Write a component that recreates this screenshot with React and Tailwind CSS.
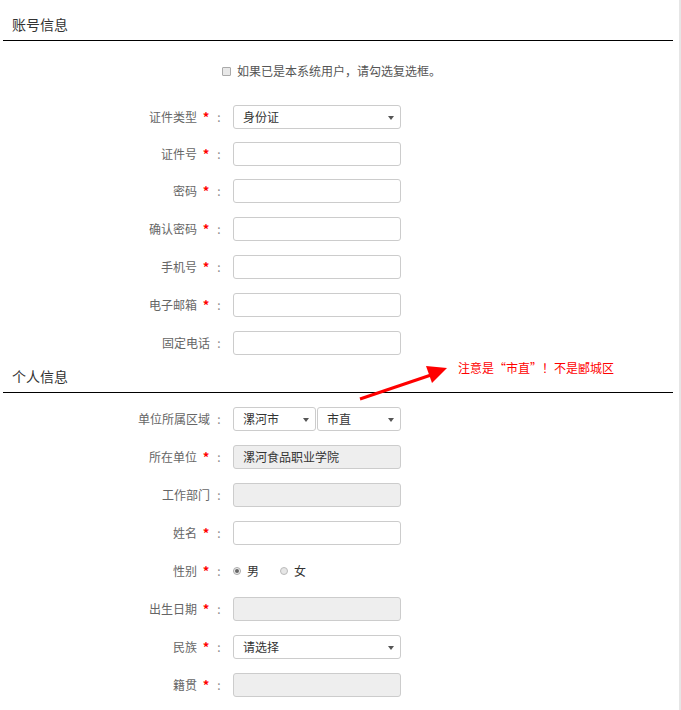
import React from 'react';

const font = { fontFamily: '"Noto Sans CJK SC", "Noto Sans", sans-serif' };

// small triangle used by the select boxes
const Caret = () => (
  <span className="absolute right-[6px] top-[10px] h-0 w-0 border-x-[3px] border-t-[4px] border-x-transparent border-t-[#555]" />
);

const Field = ({ label, required = true, h = 'h-[38px]', children }) => (
  <div className={`flex ${h} items-center text-[12px]`}>
    {required ? (
      <>
        <div className="w-[197px] text-right text-[#666]">{label}</div>
        <div className="w-[18px] text-center text-[13px] font-bold text-[#f00]">*</div>
      </>
    ) : (
      <div className="w-[215px] pr-[5px] text-right text-[#666]">{label}</div>
    )}
    <div className="w-[8px] text-center text-[#888]">:</div>
    <div className="ml-[10px] flex">{children}</div>
  </div>
);

const Input = ({ value = '', disabled = false, w = 'w-[168px]' }) => (
  <div
    className={`flex h-[24px] ${w} items-center rounded-[3px] border border-[#ccc] px-[9px] text-[12px] text-[#333] ${
      disabled ? 'bg-[#eee]' : 'bg-white'
    }`}
  >
    {value}
  </div>
);

const Select = ({ value, w = 'w-[168px]' }) => (
  <div className={`relative flex h-[24px] ${w} items-center rounded-[3px] border border-[#ccc] bg-white px-[9px] text-[12px] text-[#333]`}>
    {value}
    <Caret />
  </div>
);

const Heading = ({ children, className = '' }) => (
  <div className={className}>
    <div className="flex h-[24px] items-center pl-[12px] text-[14px] text-[#333]">{children}</div>
    <div className="ml-[3px] mr-[6px] mt-[4px] h-px bg-black" />
  </div>
);

export default function App() {
  return (
    <div className="relative h-[710px] w-[681px] overflow-hidden border-r-[2px] border-[#e6e6e6] bg-white pt-[12px]" style={font}>
      <Heading>账号信息</Heading>

      <div className="mb-[17px] mt-[20px] flex h-[20px] items-center text-[12px] text-[#555]">
        <span className="ml-[222px] mr-[6px] h-[9px] w-[9px] rounded-[1px] border border-[#aaa] bg-[#e8e8e8]" />
        如果已是本系统用户，请勾选复选框。
      </div>

      <Field label="证件类型" h="h-[37px]">
        <Select value="身份证" />
      </Field>
      <Field label="证件号" h="h-[37px]"><Input /></Field>
      <Field label="密码"><Input /></Field>
      <Field label="确认密码"><Input /></Field>
      <Field label="手机号"><Input /></Field>
      <Field label="电子邮箱"><Input /></Field>
      <Field label="固定电话" required={false}><Input /></Field>

      <Heading className="mt-[2px]">个人信息</Heading>

      <div className="mt-[7px]">
        <Field label="单位所属区域" required={false}>
          <Select value="漯河市" w="w-[83px]" />
          <div className="ml-[1px]">
            <Select value="市直" w="w-[84px]" />
          </div>
        </Field>
        <Field label="所在单位"><Input value="漯河食品职业学院" disabled /></Field>
        <Field label="工作部门" required={false}><Input disabled /></Field>
        <Field label="姓名"><Input /></Field>
        <Field label="性别">
          <div className="flex items-center text-[12px] text-[#333]">
            <span className="flex h-[8px] w-[8px] items-center justify-center rounded-full border border-[#aaa] bg-[#eee]">
              <span className="h-[4px] w-[4px] rounded-full bg-[#666]" />
            </span>
            <span className="ml-[6px]">男</span>
            <span className="ml-[21px] h-[8px] w-[8px] rounded-full border border-[#bbb] bg-[#e6e6e6]" />
            <span className="ml-[6px]">女</span>
          </div>
        </Field>
        <Field label="出生日期"><Input disabled /></Field>
        <Field label="民族"><Select value="请选择" /></Field>
        <Field label="籍贯"><Input disabled /></Field>
      </div>

      {/* annotation */}
      <div className="absolute left-[458px] top-[360px] text-[12px] leading-[16px] text-[#f00]">
        注意是“市直”！不是郾城区
      </div>
      <svg className="absolute left-[350px] top-[360px]" width="110" height="50" viewBox="0 0 110 50">
        <line x1="10" y1="39" x2="84" y2="14" stroke="#f00" strokeWidth="3" />
        <polygon points="97,8 76,6 82,23" fill="#f00" />
      </svg>
    </div>
  );
}
